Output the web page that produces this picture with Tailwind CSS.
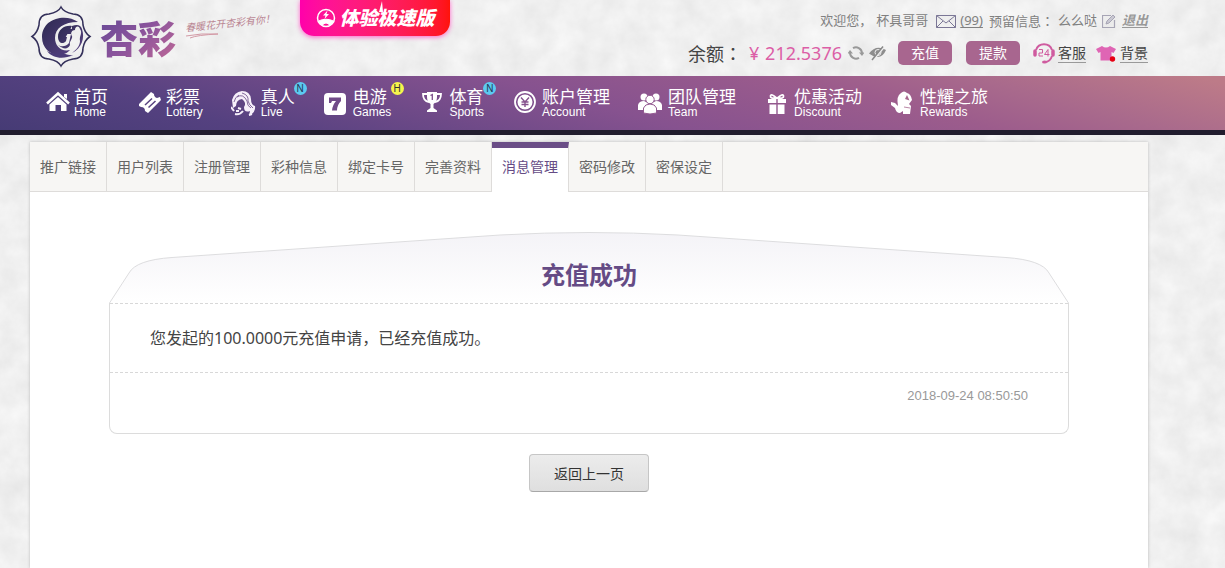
<!DOCTYPE html>
<html lang="zh-CN">
<head>
<meta charset="utf-8">
<meta name="viewport" content="width=device-width, initial-scale=1">
<title>杏彩 - 消息管理</title>
<script src="https://cdn.jsdelivr.net/npm/@tailwindcss/browser@4"></script>
</head>
<body class="relative isolate flex min-h-screen flex-col bg-[#efefef] font-['Noto_Sans','Noto_Sans_CJK_SC',sans-serif] text-[#666]">

<!-- paper texture -->
<svg class="absolute inset-0 -z-10 h-full w-full" aria-hidden="true">
  <filter id="paper" x="0" y="0" width="100%" height="100%" color-interpolation-filters="sRGB">
    <feTurbulence type="fractalNoise" baseFrequency="0.04 0.04" numOctaves="5" seed="8"/>
    <feColorMatrix type="matrix" values="0.08 0 0 0 0.9  0.08 0 0 0 0.9  0.08 0 0 0 0.9  0 0 0 0 1"/>
  </filter>
  <rect width="100%" height="100%" filter="url(#paper)"/>
</svg>

<header class="flex h-[76px] items-start pl-[30px] pr-[77px]">
  <a href="#" class="flex pt-[5px]" aria-label="杏彩">
    <svg class="h-[63px] w-[62px]" viewBox="0 0 62 63" fill="none">
      <defs><linearGradient id="lg" x1="0" y1="0" x2="1" y2="1"><stop stop-color="#2c2950"/><stop offset="1" stop-color="#5a4385"/></linearGradient></defs>
      <path d="M31 2C33 6 38 8 43 9Q53 9 53 20C54 25 56 29 60 31.500C56 34 54 38 53 43Q53 54 43 54C38 55 33 57 31 61C29 57 24 55 19 54Q9 54 9 43C8 38 6 34 2 31.500C6 29 8 25 9 20Q9 9 19 9C24 8 29 6 31 2Z" stroke="#34305a" stroke-width="1.500"/>
      <path d="M48 17C36 8 12 13 12 32C12 43 20 50 30 50C36 49 38 47 40 45C31 47 25 41 25 33C25 23 34 17 48 17Z" fill="url(#lg)"/>
      <path d="M42 21C34 20 28 25 28 32C28 38 33 40 36 36L37 32H32L33.500 29H41L39 38C36 42 31 42 28 40C34 45 38 44 40 40C39 36 43 34 42 31C40 28 42 25 45 25C45 21 49 20 50 24C53 28 49 31 50 36C50 41 46 45 42 48C52 43 55 33 52 24Q50 18 42 21L42 24C35 23 31 27 31 32C31 35 33 36 34 35Z" fill="url(#lg)"/>
      <path d="M17 46C22 53 33 55 43 50C37 51 33 47 29 48C25 49 21 48 17 46Z" fill="#4b3c78"/>
    </svg>
    <span class="ml-2 bg-gradient-to-br from-[#5f4694] via-[#8c549c] to-[#c76a94] bg-clip-text font-['Noto_Sans_CJK_SC',sans-serif] text-[38px]/[64px] font-black text-transparent">杏彩</span>
    <span class="relative mt-[10px] ml-[9px] h-6 w-[86px]">
      <span class="block -rotate-6 whitespace-nowrap font-['Noto_Sans_CJK_SC',sans-serif] text-[10px]/[16px] italic text-[#b98491]">春暖花开杏彩有你！</span>
      <svg class="absolute top-[18px] left-0 h-[6px] w-[34px]" viewBox="0 0 34 6" fill="none" stroke="#d39aa6"><path d="M1 3Q16 0 33 1Q12 2 5 5"/></svg>
    </span>
  </a>

  <a href="#" class="ml-[29px] flex h-9 w-[150px] items-center justify-center gap-1 rounded-b-[14px] bg-gradient-to-r from-[#ff00aa] to-[#ff1308] text-white shadow-[0_1px_5px_#ff5fc8]">
    <svg class="h-5 w-5" viewBox="0 0 20 20" fill="none" stroke="white"><circle cx="10" cy="10" r="8.500" stroke-width="1.500"/><path d="M2.500 13Q10 9.500 17.500 13L14 17.500Q10 12.500 6 17.500Z" fill="white" stroke-width="1"/><path d="M11.500 2.500L7 7.500H9.500L8.500 11L13 6H10.500Z" fill="white" stroke="none"/></svg>
    <span class="relative text-[19px]/[36px] font-black italic">体验极速版<svg class="absolute top-0 left-[37px] h-3 w-2" viewBox="0 0 8 12" fill="white"><path d="M5 1L6 12H2Z"/></svg></span>
  </a>

  <div class="ml-auto flex flex-col items-end whitespace-nowrap pt-[11px]">
    <div class="flex h-5 items-center text-[13px] text-[#808080]">
      <span>欢迎您，</span>
      <span class="ml-1">杯具哥哥</span>
      <a href="#" class="ml-2 flex items-center gap-1">
        <svg class="h-[14px] w-5" viewBox="0 0 20 14" fill="none" stroke="#7b7796"><path d="M.5 1.500H19.500V13.500H.5ZM.5 1.500L10 9L19.500 1.500M.5 13.500L7 7M19.500 13.500L13 7"/></svg>
        <span class="underline underline-offset-2">(99)</span>
      </a>
      <span class="ml-[6px]">预留信息<span lang="zh-TW" class="font-['Noto_Sans_CJK_TC',sans-serif]">：</span></span>
      <span class="ml-1">么么哒</span>
      <button class="ml-[5px]" aria-label="编辑">
        <svg class="h-[14px] w-[14px]" viewBox="0 0 14 14" fill="none" stroke="#a7a5b5"><path d="M9 1.500H.5V13.500H12.500V6" stroke-width="1.200"/><path d="M4 10L5 7L11 1L13 3L7 9Z" fill="#c9c8d2"/></svg>
      </button>
      <a href="#" class="ml-[6px] font-bold italic text-[#999] underline underline-offset-2">退出</a>
    </div>
    <div class="mt-[9px] flex h-[26px] items-center text-sm text-[#444]">
      <span class="text-lg">余额<span lang="zh-TW" class="font-['Noto_Sans_CJK_TC',sans-serif]">：</span></span>
      <span class="ml-[7px] flex text-lg text-[#dc5ea6]"><span class="w-4">¥</span>212.5376</span>
      <button class="ml-[6px]" aria-label="刷新">
        <svg class="h-4 w-4" viewBox="0 0 16 16" fill="none" stroke="#999" stroke-width="2"><path d="M5 3.200A6 6 0 0 1 14 8M11 12.800A6 6 0 0 1 2 8"/><path d="M11 7.500H16.500L14 11ZM-.5 8.500H5L2 5Z" fill="#999" stroke="none"/></svg>
      </button>
      <button class="ml-[5px]" aria-label="隐藏余额">
        <svg class="h-4 w-[18px]" viewBox="0 0 18 16"><path d="M0 8.500Q7-1 17 5Q12 17 0 8.500Z" fill="#8d8d8d"/><circle cx="9" cy="7.500" r="3" fill="none" stroke="#efefef"/><path d="M4 15L15 2" stroke="#efefef" stroke-width="2"/><path d="M3 15L14 1.500" stroke="#888" stroke-width="1.500"/></svg>
      </button>
      <button class="ml-[11px] h-6 w-[54px] rounded-[5px] bg-[#a8668f] text-white">充值</button>
      <button class="ml-[14px] h-6 w-[54px] rounded-[5px] bg-[#a8668f] text-white">提款</button>
      <a href="#" class="ml-[13px] flex items-center gap-[3px]">
        <svg class="h-[22px] w-[22px]" viewBox="0 0 22 22" fill="none" stroke="#cf5b9f"><path d="M3 8A8.500 8.500 0 0 1 19 8M19 14Q17 20 12 20" stroke-width="2"/><path d="M2 9V13M20 9V13" stroke-width="3.500" stroke-linecap="round"/><ellipse cx="11.500" cy="20" rx="2.500" ry="1.500" fill="#cf5b9f" stroke="none"/><path d="M6 7.500H9.500V11H6V14H10M15 14.500V7.500L11.500 12.500H16.500"/></svg>
        <span class="border-b border-[#999] leading-[19px]">客服</span>
      </a>
      <a href="#" class="ml-[10px] flex items-center gap-1">
        <svg class="h-[18px] w-5" viewBox="0 0 20 18"><path d="M6 2Q10 5 14 2L20 5L17.500 9L15.500 8V16.500H4.500V8L2.500 9L0 5Z" fill="#df65b4"/><circle cx="16.500" cy="15" r="2.700" fill="#e60012"/></svg>
        <span class="border-b border-[#999] leading-[19px]">背景</span>
      </a>
    </div>
  </div>
</header>

<nav class="flex h-[59px] items-start gap-7 whitespace-nowrap border-b-[5px] border-[#211d2e] bg-[linear-gradient(15deg,#463b75_0%,#554180_18%,#86528f_48%,#9c5c8c_70%,#a96a8c_82%,#bd7b88_98%)] pl-11 pt-3 font-['Liberation_Sans','Noto_Sans_CJK_SC',sans-serif] text-white">
  <a href="#" class="flex">
    <svg class="h-[28px] w-[30px]" viewBox="0 0 30 28" fill="none"><path d="M3 15.500L14 5.500L25 15.500" stroke="white" stroke-width="2.500"/><path d="M20 6H23V11L20 9ZM14 9L22.500 16.500V23H17V17H11.500V23H5.500V16.500Z" fill="white"/></svg>
    <span class="flex flex-col"><span class="text-[17px]/[19px]">首页</span><span class="text-xs/[10px]">Home</span></span>
  </a>
  <a href="#" class="flex">
    <svg class="h-[28px] w-[30px]" viewBox="0 0 30 28"><path d="M3 16L15 4L18 6Q18 9 21 10L24 9L25 12L12 25L9 23Q9 19 5 19L3 18Z" fill="white"/><path d="M9 17L16 10.500M12.500 19.500L19.500 13" stroke="#57427f" stroke-width="1.500"/></svg>
    <span class="flex flex-col"><span class="text-[17px]/[19px]">彩票</span><span class="text-xs/[10px]">Lottery</span></span>
  </a>
  <a href="#" class="flex">
    <svg class="h-[28px] w-[30px]" viewBox="0 0 30 28" fill="none" stroke="#f6effa" stroke-width="1.600"><path d="M1 12Q3 4 11 3Q19 3 20 11Q20 17 24 18Q25 24 18 28L19 23Q13 25 13 19Q16 15 11 11Q5 12 5 18L2 20Z" fill="#f6effa" stroke="none"/><path d="M0 19L3 23M4 26Q9 27 12 23M7 20L10 21M5 23L8 23M18 27L21 26" stroke-width="2"/><path d="M6 9Q12 5 16 13Q16 18 20 20M11 5Q18 7 17 13Q18 17 22 20M3 14Q4 9 8 7" stroke="#664684" stroke-width=".8"/></svg>
    <span class="relative flex flex-col"><span class="text-[17px]/[19px]">真人</span><span class="text-xs/[10px]">Live</span><span class="absolute -top-[6px] left-[33px] h-[13px] w-[13px] rounded-full bg-[#5ccaf0] text-center text-[10px]/[13px] text-[#223455]">N</span></span>
  </a>
  <a href="#" class="flex">
    <svg class="h-[28px] w-[30px]" viewBox="0 0 30 28"><rect x="1" y="5" width="22" height="22" rx="4" fill="white"/><path d="M6 9.500H18V13Q14 17 14 22.500H9Q9.500 17 13 13H9L8 15H6Z" fill="#704a88"/></svg>
    <span class="relative flex flex-col"><span class="text-[17px]/[19px]">电游</span><span class="text-xs/[10px]">Games</span><span class="absolute -top-[6px] left-[38px] h-[13px] w-[13px] rounded-full bg-[#f5f44c] text-center text-[10px]/[13px] text-[#333]">H</span></span>
  </a>
  <a href="#" class="flex">
    <svg class="h-[28px] w-[30px]" viewBox="0 0 30 28" fill="none"><path d="M8 4H18V9Q18 14 14.500 16V20L18 22.500V24H8V22.500L11.500 20V16Q8 14 8 9Z" fill="white"/><path d="M8 6H4Q4 13 10 14M18 6H22Q22 13 16 14" stroke="white" stroke-width="1.800"/><path d="M11.500 7.500L13.300 6.500V12" stroke="#7c4e8b" stroke-width="1.300"/></svg>
    <span class="relative flex flex-col"><span class="text-[17px]/[19px]">体育</span><span class="text-xs/[10px]">Sports</span><span class="absolute -top-[6px] left-[34px] h-[13px] w-[13px] rounded-full bg-[#5ccaf0] text-center text-[10px]/[13px] text-[#223455]">N</span></span>
  </a>
  <a href="#" class="flex">
    <svg class="h-[28px] w-[30px]" viewBox="0 0 30 28" fill="none"><circle cx="13" cy="14" r="10" stroke="white" stroke-width="1.800"/><circle cx="13" cy="14" r="7.500" fill="white"/><path d="M9 9.500L13 14L17 9.500M13 13.500V19M9.500 14H16.500M9.500 16.500H16.500" stroke="#85518d" stroke-width="1.400"/></svg>
    <span class="flex flex-col"><span class="text-[17px]/[19px]">账户管理</span><span class="text-xs/[10px]">Account</span></span>
  </a>
  <a href="#" class="flex">
    <svg class="h-[28px] w-[30px]" viewBox="0 0 30 28" fill="white"><circle cx="6" cy="9" r="3.500"/><circle cx="18" cy="9" r="3.500"/><path d="M0 22V17Q1 13 6 13L10 15V22ZM24 22V17Q23 13 18 13L14 15V22Z"/><g stroke="#945991"><circle cx="12" cy="11.500" r="4.200"/><path d="M5.500 25V20Q7 16 12 16T18.500 20V25Q12 27 5.500 25Z"/></g></svg>
    <span class="flex flex-col"><span class="text-[17px]/[19px]">团队管理</span><span class="text-xs/[10px]">Team</span></span>
  </a>
  <a href="#" class="flex">
    <svg class="h-[28px] w-[30px]" viewBox="0 0 30 28" fill="white"><path d="M4 11H12.300V15H4ZM13.700 11H22V15H13.700ZM5.500 16.500H12.300V26H5.500ZM13.700 16.500H20.500V26H13.700Z"/><path d="M12.500 10Q6 11 6.500 8T12.500 10ZM13.500 10Q20 11 19.500 8T13.500 10Z" fill="none" stroke="white" stroke-width="1.800"/></svg>
    <span class="flex flex-col"><span class="text-[17px]/[19px]">优惠活动</span><span class="text-xs/[10px]">Discount</span></span>
  </a>
  <a href="#" class="flex">
    <svg class="h-[28px] w-[30px]" viewBox="0 0 30 28" fill="white"><path d="M1 14L5 15L8 18Q6 8 11 5Q14 2 17 5Q21 6 22 12L19 16L21 18L20 26H13V23L10 25Q6 25 5 20L1 17Z"/><path d="M17 7L15 11L19.500 12.500Z" fill="#a8688f"/><path d="M14 19L20 20" stroke="#a8688f" stroke-width=".8"/></svg>
    <span class="flex flex-col"><span class="text-[17px]/[19px]">性耀之旅</span><span class="text-xs/[10px]">Rewards</span></span>
  </a>
</nav>

<main class="mt-[7px] mr-[77px] ml-[30px] flex-1 bg-white shadow-[0_0_3px_#bbb]">
  <nav class="flex h-[50px] whitespace-nowrap border-b border-[#dedcda] bg-[#f7f6f4] text-sm/[50px]">
    <a href="#" class="border-r border-[#dedcda] px-[10px]">推广链接</a>
    <a href="#" class="border-r border-[#dedcda] px-[10px]">用户列表</a>
    <a href="#" class="border-r border-[#dedcda] px-[10px]">注册管理</a>
    <a href="#" class="border-r border-[#dedcda] px-[10px]">彩种信息</a>
    <a href="#" class="border-r border-[#dedcda] px-[10px]">绑定卡号</a>
    <a href="#" class="border-r border-[#dedcda] px-[10px]">完善资料</a>
    <a href="#" aria-current="page" class="h-[50px] border-t-[6px] border-r border-t-[#6b4e87] border-r-[#dedcda] bg-white px-[10px] leading-[38px] text-[#654b85]">消息管理</a>
    <a href="#" class="border-r border-[#dedcda] px-[10px]">密码修改</a>
    <a href="#" class="border-r border-[#dedcda] px-[10px]">密保设定</a>
  </nav>

  <article class="mx-auto mt-10 w-full max-w-[960px]">
    <div class="relative isolate">
      <svg class="absolute inset-0 -z-10 h-full w-full" viewBox="0 0 960 71" preserveAspectRatio="none">
        <defs><linearGradient id="flap" x1="0" y1="0" x2="0" y2="1"><stop stop-color="#f4f3f7"/><stop offset="1" stop-color="#fff"/></linearGradient></defs>
        <path d="M.5 71L20 41Q27 28 63 25.500L391 3Q480-2 569 3L897 25.500Q933 28 940 41L959.500 71" fill="url(#flap)" stroke="#dddddf"/>
      </svg>
      <h1 class="pt-[25px] pb-[10px] text-center text-2xl/[36px] font-bold text-[#654b85]">充值成功</h1>
    </div>
    <div class="rounded-b-lg border-x border-b border-[#dcdcdc]">
      <p class="border-y border-dashed border-[#d8d8d8] px-10 py-[22px] text-base text-[#444]">您发起的100.0000元充值申请，已经充值成功。</p>
      <p class="px-10 pt-[13px] pb-[27px] text-right font-['Liberation_Sans',sans-serif] text-[13px]/[20px] text-[#999]"><time>2018-09-24 08:50:50</time></p>
    </div>
  </article>
  <div class="mt-5 flex justify-center">
    <button class="h-[38px] w-[120px] rounded-[4px] border border-[#c6c6c6] border-b-[#a8a8a8] bg-gradient-to-b from-[#ececec] to-[#dfdfdf] pt-px text-sm text-[#333]">返回上一页</button>
  </div>
</main>
</body>
</html>
